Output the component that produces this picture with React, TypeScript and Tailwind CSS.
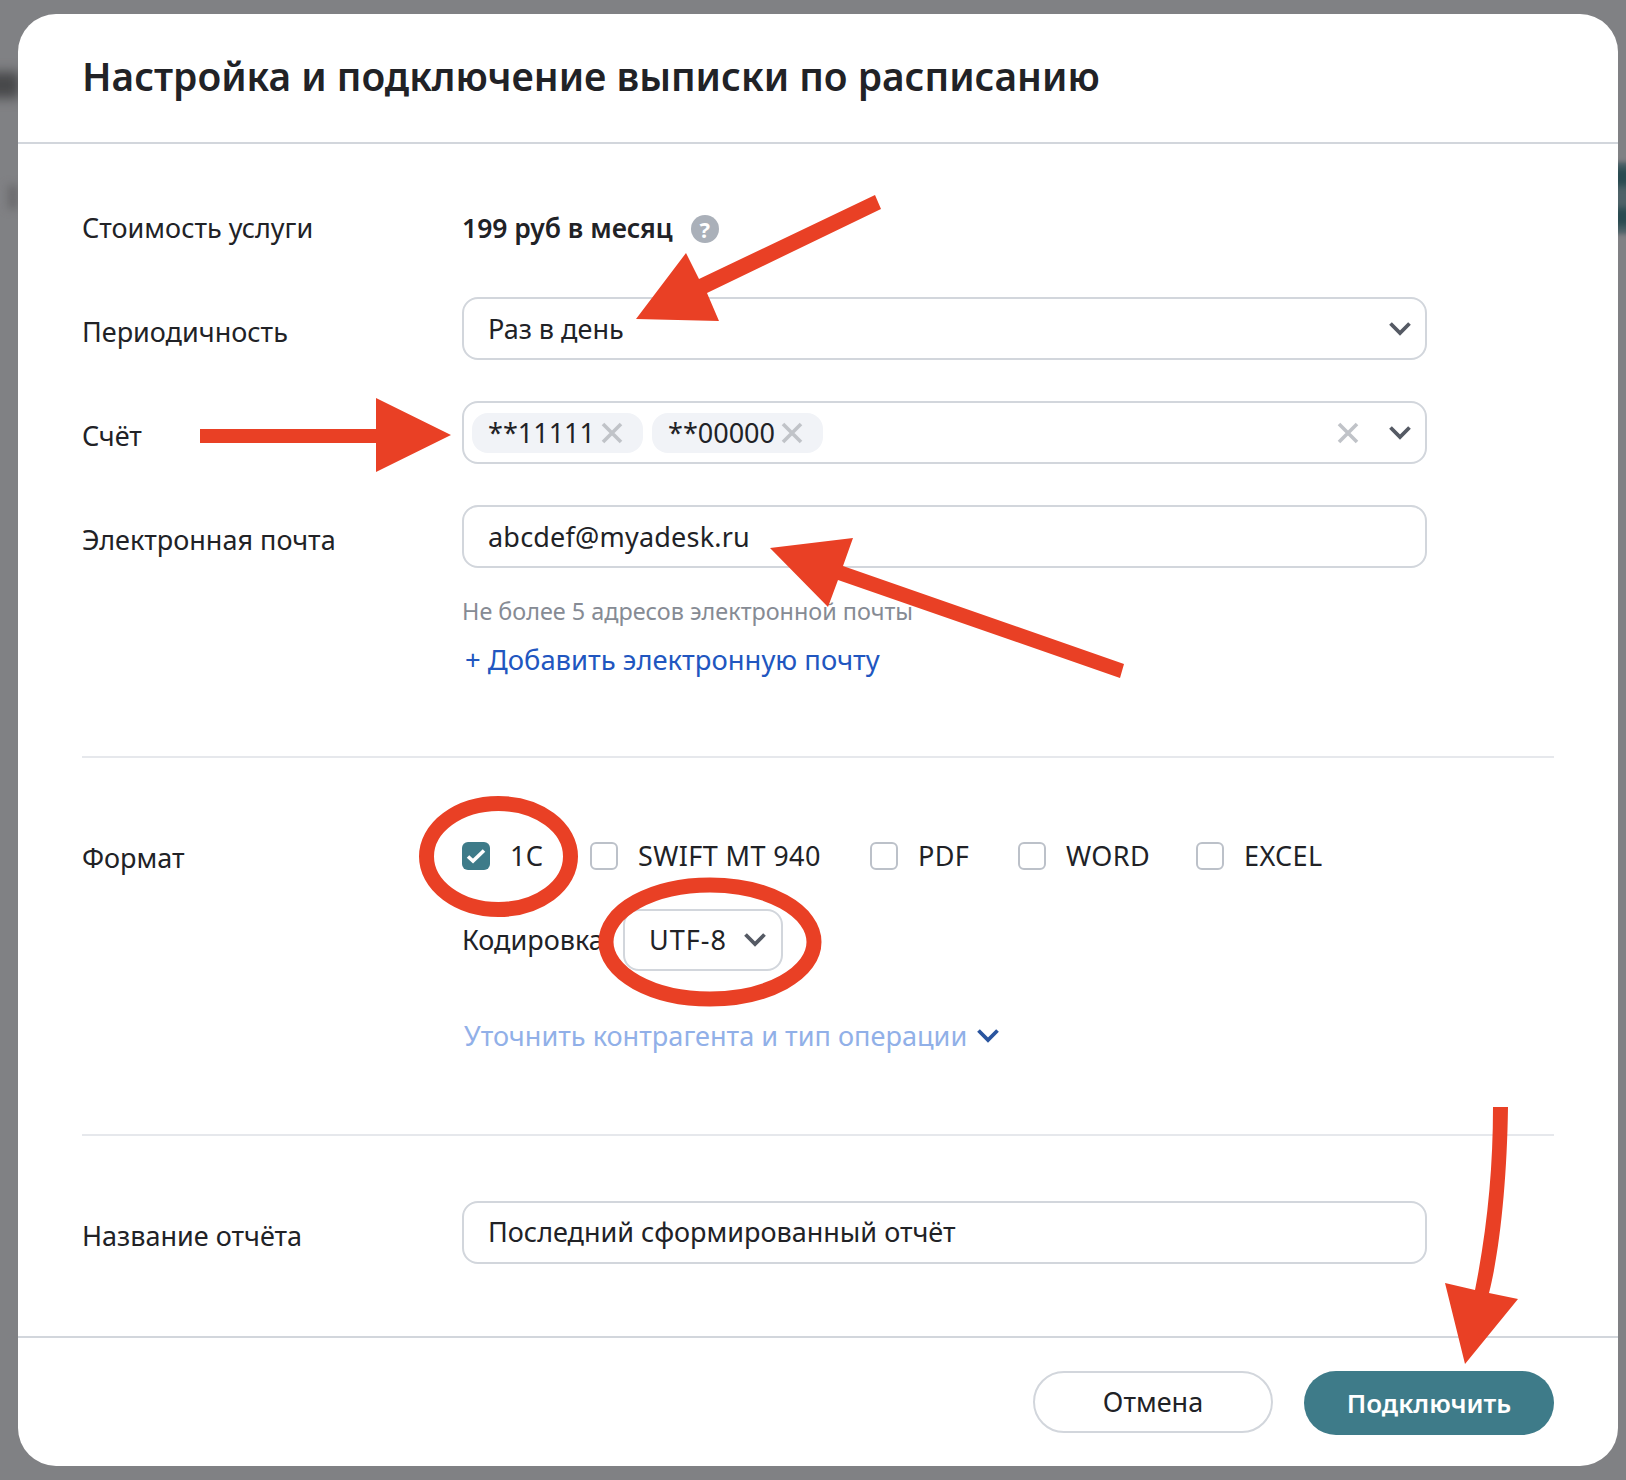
const labelCls = 'text-[27px] leading-[36px] text-[#212226]';

function Chevron({ className = '', color = '#555a64' }: { className?: string; color?: string }) {
  return (
    <svg width="24" height="16" viewBox="0 0 24 16" fill="none" className={className}>
      <path d="M2.5 2.5l9.5 9.5 9.5-9.5" stroke={color} strokeWidth="3.8" />
    </svg>
  );
}

function Cross({ size = 22, color = '#c0c3c8' }: { size?: number; color?: string }) {
  return (
    <svg width={size} height={size} viewBox="0 0 22 22" fill="none">
      <path d="M2 2l18 18M20 2L2 20" stroke={color} strokeWidth="3.6" />
    </svg>
  );
}

function Tag({ text }: { text: string }) {
  return (
    <div className="flex h-10 w-[171px] items-center rounded-[16px] bg-[#f1f3f7] pl-[16px] text-[27px] text-[#212226]">
      <span className="w-[113px] pt-[2px]">{text}</span>
      <Cross />
    </div>
  );
}

function Check({ label, checked, w }: { label: string; checked?: boolean; w: string }) {
  return (
    <div className={`flex items-center ${w}`}>
      {checked ? (
        <div className="flex h-7 w-7 items-center justify-center rounded-[6px] bg-[#3e7b89]">
          <svg width="20" height="16" viewBox="0 0 20 16" fill="none">
            <path d="M2 8.5l5 4.5L18 2.5" stroke="#fff" strokeWidth="3.6" />
          </svg>
        </div>
      ) : (
        <div className="h-7 w-7 rounded-[6px] border-2 border-[#bcc1c9]" />
      )}
      <span className="ml-[20px] text-[27px] leading-[36px] tracking-[0.4px] text-[#212226]">{label}</span>
    </div>
  );
}

function Annotations() {
  return (
    <svg width="1626" height="1480" viewBox="0 0 1626 1480" className="pointer-events-none absolute inset-0" fill="#e94025">
      <polygon points="875,195 881,209 707,293 719,321 636,319 686,253 699,279" />
      <polygon points="200,429 376,429 376,398 451,435 376,472 376,443 200,443" />
      <polygon points="770,548 853,538 843,566 1124,664 1120,678 838,580 828,607" />
      <path d="M1493,1107 H1508 C1507,1180 1500,1250 1489,1293 L1518,1299 L1465,1364 L1445,1283 L1475,1290 C1487,1230 1493,1170 1493,1107 Z" />
      <ellipse cx="498.5" cy="856.5" rx="72" ry="53" fill="none" stroke="#e94025" strokeWidth="15" />
      <ellipse cx="710" cy="942" rx="104" ry="57" fill="none" stroke="#e94025" strokeWidth="15" />
    </svg>
  );
}

export default function App() {
  return (
    <div className="relative h-[1480px] w-[1626px] overflow-hidden bg-[#808184] pl-[18px] pt-[14px] font-['Noto_Sans',sans-serif]">
      {/* blurred page behind the dialog */}
      <div className="absolute left-[-20px] top-[72px] h-[26px] w-[40px] bg-[#47484a] blur-[6px]" />
      <div className="absolute left-[8px] top-[185px] h-[24px] w-[10px] bg-[#6a6a6c] blur-[4px]" />
      <div className="absolute left-[1612px] top-[162px] h-[72px] w-[20px] bg-[#4e6268] blur-[2px]" />
      <div className="absolute left-[1612px] top-[168px] h-[18px] w-[20px] bg-[#2a4a50] blur-[3px]" />
      <div className="absolute left-[1612px] top-[208px] h-[18px] w-[20px] bg-[#2a4a50] blur-[3px]" />

      <div className="relative flex h-[1452px] w-[1600px] flex-col rounded-[38px] bg-white">
        <div className="flex h-[130px] items-center border-b-2 border-[#d2d6dc] pb-[4px] pl-[64px]">
          <h1 className="text-[38.9px] font-semibold leading-none text-[#212226]">
            Настройка и подключение выписки по расписанию
          </h1>
        </div>

        <div className="flex flex-1 flex-col px-[64px]">
          <div className="h-[614px] border-b-2 border-[#e6e8ec] pt-[64px]">
            <div className="flex h-10 items-center">
              <div className={`w-[380px] ${labelCls}`}>Стоимость услуги</div>
              <div className="mt-[1px] text-[26.5px] font-semibold text-[#212226]">199 руб в месяц</div>
              <div className="ml-[18px] mt-[2px] flex h-7 w-7 items-center justify-center rounded-full bg-[#aab0b9] text-[22px] font-bold leading-none text-white">?</div>
            </div>

            <div className="mt-[49px] flex flex-col gap-[41px]">
              <div className="flex">
                <div className={`w-[380px] pt-[17px] ${labelCls}`}>Периодичность</div>
                <div className="flex h-[63px] w-[965px] items-center justify-between rounded-[16px] border-2 border-[#d2d6dc] pl-[24px] pr-[13px] text-[27px] text-[#212226]">
                  <span className="pt-[2px]">Раз в день</span>
                  <Chevron />
                </div>
              </div>
              <div className="flex">
                <div className={`w-[380px] pt-[17px] ${labelCls}`}>Счёт</div>
                <div className="flex h-[63px] w-[965px] items-center rounded-[16px] border-2 border-[#d2d6dc] pl-[8px] pr-[13px]">
                  <div className="flex flex-1 gap-[9px]">
                    <Tag text="**11111" />
                    <Tag text="**00000" />
                  </div>
                  <Cross />
                  <Chevron className="ml-[29px]" />
                </div>
              </div>
              <div className="flex">
                <div className={`w-[380px] pt-[17px] ${labelCls}`}>Электронная почта</div>
                <div>
                  <div className="flex h-[63px] w-[965px] items-center rounded-[16px] border-2 border-[#d2d6dc] pl-[24px] text-[27px] tracking-[0.2px] text-[#212226]">
                    <span className="pt-[2px]">abcdef@myadesk.ru</span>
                  </div>
                  <div className="mt-[27px] text-[23.4px] leading-[32px] text-[#868b94]">Не более 5 адресов электронной почты</div>
                  <div className="mt-[15px] pl-[3px] text-[27.4px] leading-[36px] text-[#2156c0]">+ Добавить электронную почту</div>
                </div>
              </div>
            </div>
          </div>

          <div className="h-[378px] border-b-2 border-[#e6e8ec]">
            <div className="flex pt-[84px]">
              <div className={`-mt-[2px] w-[380px] ${labelCls}`}>Формат</div>
              <div>
                <div className="flex h-7 items-center">
                  <Check label="1С" checked w="w-[128px]" />
                  <Check label="SWIFT MT 940" w="w-[280px]" />
                  <Check label="PDF" w="w-[148px]" />
                  <Check label="WORD" w="w-[178px]" />
                  <Check label="EXCEL" w="w-[160px]" />
                </div>
                <div className="mt-[39px] flex items-center">
                  <span className="w-[161px] text-[27px] text-[#212226]">Кодировка</span>
                  <div className="flex h-[62px] w-[160px] items-center justify-between rounded-[16px] border-2 border-[#d2d6dc] pl-[24px] pr-[14px] text-[27px] tracking-[1px] text-[#212226]">
                    <span>UTF-8</span>
                    <Chevron />
                  </div>
                </div>
                <div className="mt-[47px] flex items-center pl-[2px] text-[27.1px] leading-[36px] text-[#91b0e8]">
                  <span>Уточнить контрагента и тип операции</span>
                  <Chevron className="ml-[9px]" color="#2a559f" />
                </div>
              </div>
            </div>
          </div>

          <div className="flex pt-[65px]">
            <div className={`w-[380px] pt-[17px] ${labelCls}`}>Название отчёта</div>
            <div className="flex h-[63px] w-[965px] items-center rounded-[16px] border-2 border-[#d2d6dc] pl-[24px] text-[27px] text-[#212226]">
              Последний сформированный отчёт
            </div>
          </div>
        </div>

        <div className="flex h-[130px] items-start justify-end gap-[31px] border-t-2 border-[#d2d6dc] pr-[64px] pt-[33px]">
          <button className="h-[62px] w-[240px] rounded-full border-2 border-[#d2d6dc] text-[27px] text-[#212226]">Отмена</button>
          <button className="h-[64px] w-[250px] rounded-full bg-[#3e7b89] text-[26px] font-semibold text-white">Подключить</button>
        </div>
      </div>

      <Annotations />
    </div>
  );
}
